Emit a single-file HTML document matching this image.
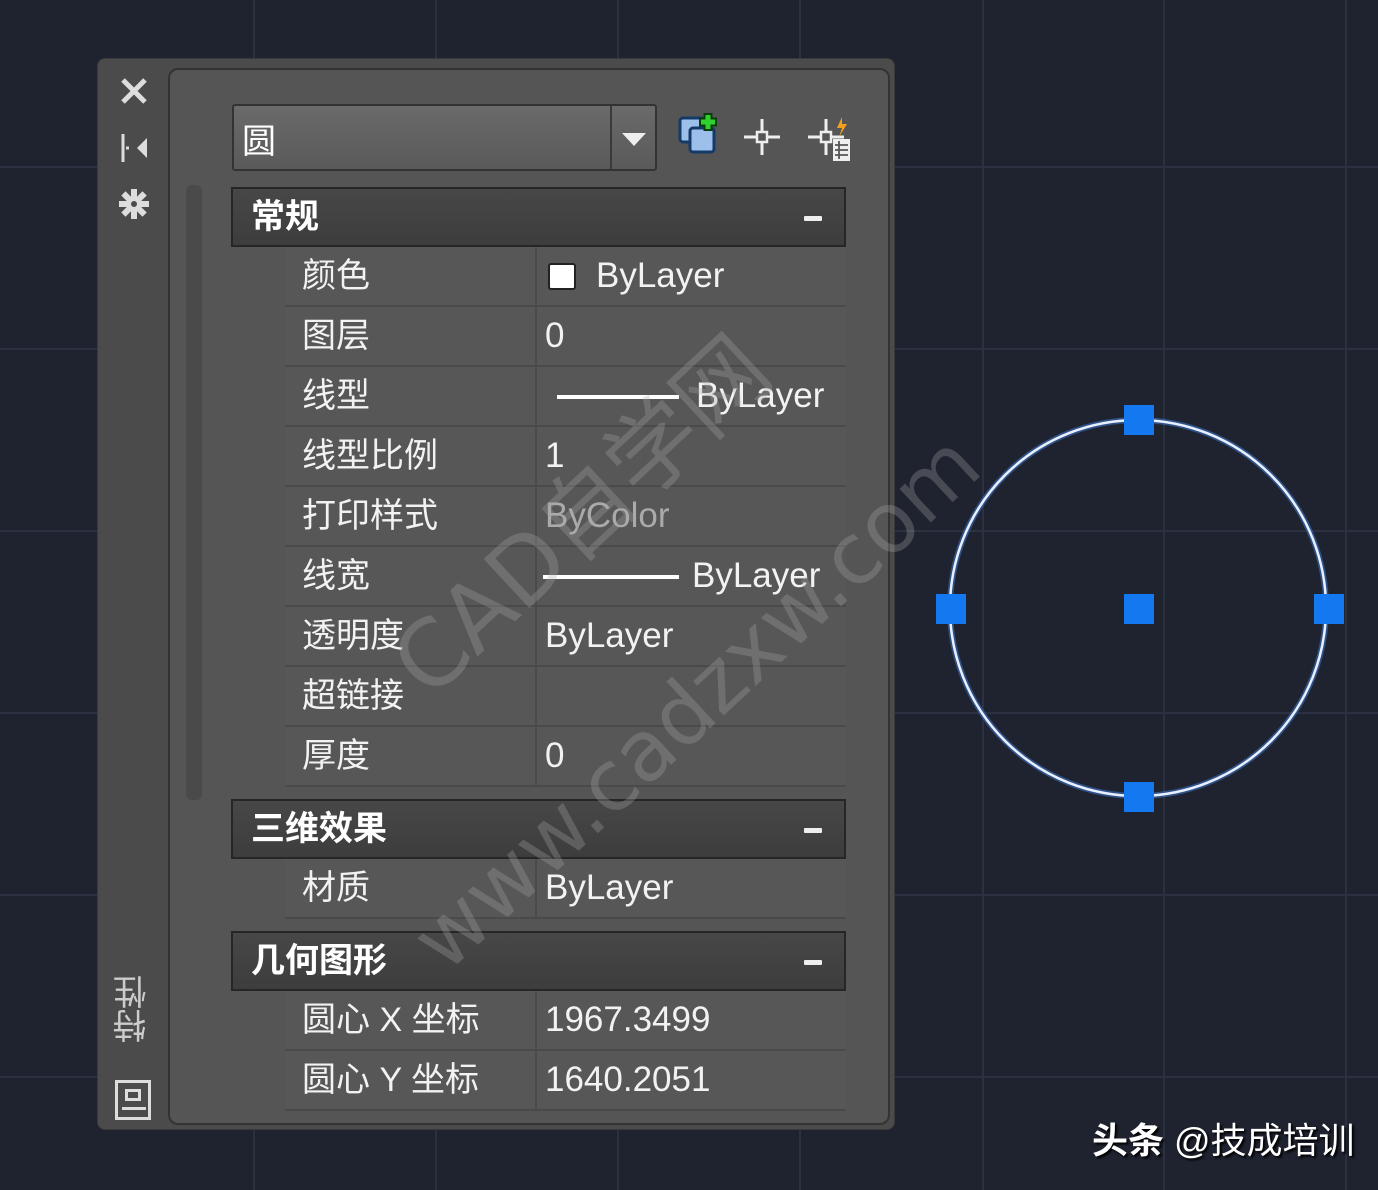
<!DOCTYPE html>
<html><head><meta charset="utf-8"><style>
*{margin:0;padding:0;box-sizing:border-box}
body{width:1378px;height:1190px;overflow:hidden;background:#1f2330;position:relative;font-family:"Liberation Sans","Noto Sans CJK SC",sans-serif}
.vl{position:absolute;top:0;width:2px;height:1190px;background:#2c3141}
.hl{position:absolute;left:0;height:2px;width:1378px;background:#2c3141}
.abs{position:absolute}
.outer{left:97px;top:58px;width:798px;height:1072px;background:#4b4b4b;border-radius:8px;border:1px solid #3a3a3a}
.inner{left:168px;top:68px;width:722px;height:1057px;background:#555;border:2px solid #333;border-radius:10px}
.hdr{position:absolute;left:231px;width:615px;height:60px;background:linear-gradient(#474747,#3d3d3d);border:2px solid #262626;color:#fff;font-weight:bold;font-size:34px;line-height:56px;padding-left:18px}
.hdr .m{position:absolute;right:22px;top:27px;width:18px;height:5px;background:#eee;border-radius:1px}
.row{position:absolute;left:285px;width:561px;height:60px;background:#575757;border-bottom:2px solid #4a4a4a;color:#f2f2f2;font-size:34px;line-height:58px}
.row .l{position:absolute;left:17px;top:0}
.row .d{position:absolute;left:250px;top:0;width:2px;height:60px;background:#4a4a4a}
.row .v{position:absolute;left:260px;top:0;font-family:"Liberation Sans",sans-serif;font-size:35px}
.sq{position:absolute;width:30px;height:30px;background:#1478f0}
.wm{position:absolute;color:rgba(170,170,170,0.3);font-family:"DejaVu Sans","Noto Sans CJK SC",sans-serif;white-space:nowrap;transform-origin:left bottom;line-height:1}
</style></head><body>
<div class="vl" style="left:253px"></div><div class="vl" style="left:435px"></div><div class="vl" style="left:617px"></div><div class="vl" style="left:799px"></div><div class="vl" style="left:982px"></div><div class="vl" style="left:1163px"></div><div class="vl" style="left:1345px"></div>
<div class="hl" style="top:166px"></div><div class="hl" style="top:348px"></div><div class="hl" style="top:530px"></div><div class="hl" style="top:712px"></div><div class="hl" style="top:894px"></div><div class="hl" style="top:1076px"></div>

<div class="abs outer"></div>
<div class="abs inner"></div>
<svg class="abs" style="left:115px;top:72px" width="40" height="150" viewBox="0 0 40 150">
 <path d="M8 8 L30 30 M30 8 L8 30" stroke="#ddd" stroke-width="5"/>
 <path d="M8 62 V90 M11 76 H14" stroke="#ddd" stroke-width="3"/><path d="M32 66 L22 76 L32 86 Z" fill="#ddd"/>
 <g fill="#ddd"><circle cx="19" cy="132" r="7"/><rect x="16" y="117" width="6" height="30"/><rect x="4" y="129" width="30" height="6"/><rect x="16" y="117" width="6" height="30" transform="rotate(45 19 132)"/><rect x="16" y="117" width="6" height="30" transform="rotate(-45 19 132)"/></g>
 <circle cx="19" cy="132" r="3" fill="#4b4b4b"/>
</svg>
<div class="abs" style="left:114px;top:975px;color:#ccc;font-size:34px;writing-mode:vertical-rl;transform:rotate(180deg);line-height:38px">特性</div>
<div class="abs" style="left:115px;top:1080px;width:36px;height:40px;border:3px solid #ddd"><div style="position:absolute;left:7px;top:6px;width:16px;height:12px;border:3px solid #ddd"></div><div style="position:absolute;left:4px;top:24px;width:24px;height:3px;background:#ddd"></div></div>
<div class="abs" style="left:186px;top:185px;width:16px;height:615px;background:#4a4a4a;border-radius:6px"></div>
<div class="abs" style="left:232px;top:104px;width:425px;height:67px;background:linear-gradient(#6a6a6a,#5a5a5a);border:2px solid #333;border-radius:3px"></div>
<div class="abs" style="left:610px;top:106px;width:2px;height:63px;background:#3a3a3a"></div>
<div class="abs" style="left:242px;top:114px;color:#fff;font-size:34px">圆</div>
<svg class="abs" style="left:620px;top:130px" width="28" height="20"><path d="M2 3 H26 L14 16 Z" fill="#eee"/></svg>
<svg class="abs" style="left:675px;top:110px" width="50" height="50">
 <rect x="5" y="8" width="24" height="24" rx="3" fill="#9cc0ea" stroke="#143a6a" stroke-width="3"/>
 <rect x="15" y="18" width="24" height="24" rx="3" fill="#9cc0ea" stroke="#143a6a" stroke-width="3"/>
 <path d="M33 3 V21 M24 12 H42" stroke="#0a3d0a" stroke-width="9"/><path d="M33 5 V19 M26 12 H40" stroke="#2fd12f" stroke-width="5"/>
</svg>
<svg class="abs" style="left:742px;top:117px" width="40" height="40"><path d="M20 2 V38 M2 20 H38" stroke="#eee" stroke-width="3"/><rect x="15" y="15" width="10" height="10" fill="#555" stroke="#eee" stroke-width="2.5"/></svg>
<svg class="abs" style="left:806px;top:115px" width="50" height="50"><path d="M20 4 V40 M2 22 H38" stroke="#eee" stroke-width="3"/><rect x="15" y="17" width="10" height="10" fill="#555" stroke="#eee" stroke-width="2.5"/><path d="M36 2 L31 13 H36 L33 22 L41 9 H36 Z" fill="#f0a020"/><rect x="27" y="24" width="17" height="22" fill="#eee"/><path d="M29 30 H42 M29 35 H42 M29 40 H42 M33 26 V44" stroke="#555" stroke-width="1.8"/></svg>

<div class="hdr" style="top:187px">常规<div class="m"></div></div>
<div class="row" style="top:247px"><span class="l">颜色</span><div class="d"></div><span class="v" style="left:311px">ByLayer</span><div style="position:absolute;left:263px;top:16px;width:28px;height:27px;background:#fff;border:2px solid #222;border-radius:3px"></div></div>
<div class="row" style="top:307px"><span class="l">图层</span><div class="d"></div><span class="v">0</span></div>
<div class="row" style="top:367px"><span class="l">线型</span><div class="d"></div><div style="position:absolute;left:272px;top:28px;width:122px;height:4px;background:#fff"></div><span class="v" style="left:411px">ByLayer</span></div>
<div class="row" style="top:427px"><span class="l">线型比例</span><div class="d"></div><span class="v">1</span></div>
<div class="row" style="top:487px"><span class="l">打印样式</span><div class="d"></div><span class="v" style="color:#aaa">ByColor</span></div>
<div class="row" style="top:547px"><span class="l">线宽</span><div class="d"></div><div style="position:absolute;left:258px;top:28px;width:136px;height:4px;background:#fff"></div><span class="v" style="left:407px">ByLayer</span></div>
<div class="row" style="top:607px"><span class="l">透明度</span><div class="d"></div><span class="v">ByLayer</span></div>
<div class="row" style="top:667px"><span class="l">超链接</span><div class="d"></div></div>
<div class="row" style="top:727px"><span class="l">厚度</span><div class="d"></div><span class="v">0</span></div>

<div class="hdr" style="top:799px">三维效果<div class="m"></div></div>
<div class="row" style="top:859px"><span class="l">材质</span><div class="d"></div><span class="v">ByLayer</span></div>

<div class="hdr" style="top:931px">几何图形<div class="m"></div></div>
<div class="row" style="top:991px"><span class="l">圆心 X 坐标</span><div class="d"></div><span class="v">1967.3499</span></div>
<div class="row" style="top:1051px"><span class="l">圆心 Y 坐标</span><div class="d"></div><span class="v">1640.2051</span></div>

<div class="wm" style="left:440px;top:620px;font-size:92px;transform:rotate(-43deg)">CAD自学网</div>
<div class="wm" style="left:455px;top:900px;font-size:84px;transform:rotate(-43deg)">www.cadzxw.com</div>

<svg class="abs" style="left:930px;top:400px" width="420" height="420">
 <circle cx="208" cy="208" r="188" fill="none" stroke="#3a6fc0" stroke-width="6" opacity="0.6"/>
 <circle cx="208" cy="208" r="188" fill="none" stroke="#e8f0ff" stroke-width="2.5"/>
</svg>
<div class="sq" style="left:1124px;top:405px"></div>
<div class="sq" style="left:1124px;top:594px"></div>
<div class="sq" style="left:1124px;top:782px"></div>
<div class="sq" style="left:936px;top:594px"></div>
<div class="sq" style="left:1314px;top:594px"></div>

<div class="abs" style="left:1092px;top:1112px;color:#fff;font-size:36px;font-weight:bold;text-shadow:2px 2px 2px #000;white-space:nowrap">头条 <span style="font-weight:normal">@技成培训</span></div>
</body></html>
